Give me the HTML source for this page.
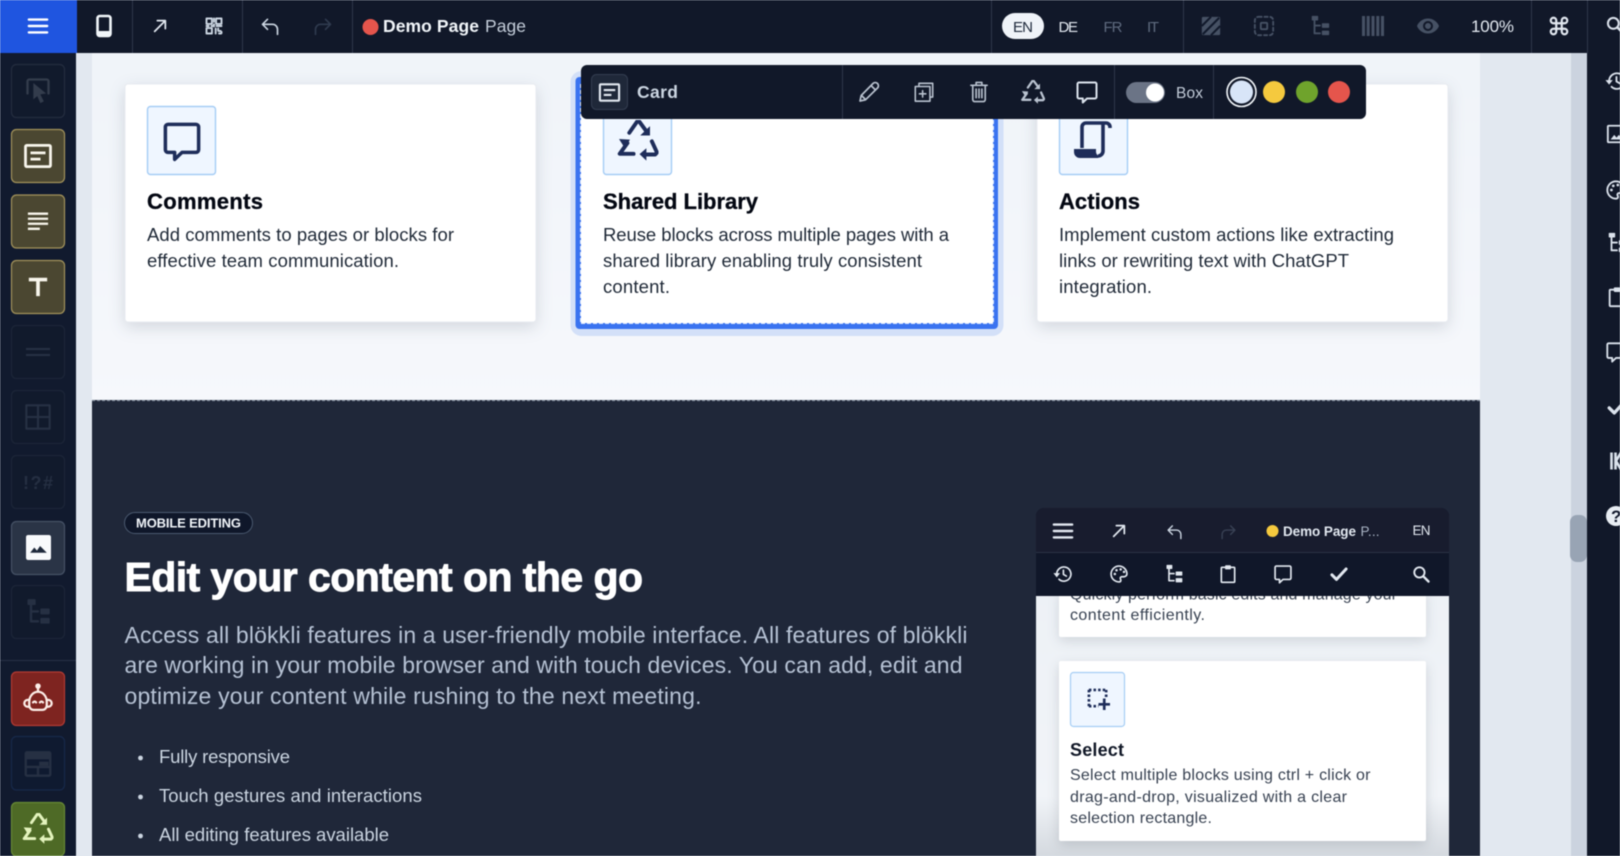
<!DOCTYPE html>
<html lang="en"><head><meta charset="utf-8"><title>Demo Page</title>
<style>
html,body{margin:0;padding:0;width:1620px;height:856px;overflow:hidden;background:#e2e8f0}
svg{display:block;filter:blur(.4px)}
text{font-family:"Liberation Sans",sans-serif}
.t{font-weight:700;font-size:22px;fill:#030712;stroke:#030712;stroke-width:.3px}
.d{font-size:18.5px;fill:#1f2937}
.p{font-size:23px;fill:#b6c2d4}
.l{font-size:18.5px;fill:#cbd5e1}
.s{font-size:16px;fill:#374151}
.sym{fill:none;stroke:currentColor;stroke-linecap:round;stroke-linejoin:round}
</style></head><body>
<svg xmlns="http://www.w3.org/2000/svg" width="1620" height="856" viewBox="0 0 1620 856" stroke-width="2">
<defs>
<linearGradient id="phone" x1="0" y1="0" x2="0" y2="1"><stop offset="0" stop-color="#edf1f6"/><stop offset=".8" stop-color="#f1f4f8"/><stop offset="1" stop-color="#d4d9df"/></linearGradient>
<linearGradient id="pg" x1="0" y1="0" x2="0" y2="1"><stop offset="0" stop-color="#f0f4f9"/><stop offset="1" stop-color="#f6f8fc"/></linearGradient>
<symbol id="i-menu" viewBox="0 0 24 24"><path class="sym" d="M2 5h20M2 12h20M2 19h20" stroke-width="2.600"/></symbol>
<symbol id="i-arrow" viewBox="0 0 24 24"><path class="sym" stroke-width="2.600" d="M4 20L20 4M8 4h12v12"/></symbol>
<symbol id="i-qr" viewBox="0 0 24 24"><g class="sym" stroke-width="2.300" stroke-linecap="butt"><rect x="3" y="3" width="6.500" height="6.500"/><rect x="14.500" y="3" width="6.500" height="6.500"/><rect x="3" y="14.500" width="6.500" height="6.500"/><path d="M12 3v4M12 10v3M3 12h3M9 12h3M15 12h6M14 15v6M17 15v3h4M18 21h3v-2" stroke-dasharray="2.500 1"/></g></symbol>
<symbol id="i-undo" viewBox="0 0 24 24"><path class="sym" d="M9 4L3 10l6 6M3 10h12a6 6 0 0 1 6 6v6"/></symbol>
<symbol id="i-redo" viewBox="0 0 24 24"><path class="sym" d="M15 4l6 6-6 6M21 10H9a6 6 0 0 0-6 6v6"/></symbol>
<symbol id="i-hatch" viewBox="0 0 24 24"><rect x="2" y="2" width="20" height="20" rx="1.500" fill="currentColor"/><path d="M2 12L12 2M3 21L21 3M12 22L22 12" stroke="#10182a" stroke-width="2.200"/></symbol>
<symbol id="i-dashsq" viewBox="0 0 24 24"><rect x="2" y="2" width="20" height="20" rx="4" class="sym" stroke-dasharray="3.500 3" stroke-linecap="butt"/><rect x="8.500" y="8.500" width="7" height="7" rx="1" class="sym"/></symbol>
<symbol id="i-tree" viewBox="0 0 24 24"><g fill="currentColor"><rect x="3" y="1" width="7" height="5" rx=".8"/><rect x="14" y="9" width="8" height="5" rx=".8"/><rect x="14" y="17" width="8" height="5" rx=".8"/></g><path class="sym" stroke-linecap="butt" d="M6 6v14h6M6 11.500h6"/></symbol>
<symbol id="i-bars" viewBox="0 0 24 24"><path d="M2.500 2v20M7.200 2v20M12 2v20M16.800 2v20M21.500 2v20" stroke="currentColor" stroke-width="3"/></symbol>
<symbol id="i-eye" viewBox="0 0 24 24"><path fill="currentColor" fill-rule="evenodd" d="M12 4.500C7 4.500 2.700 7.600 1 12c1.700 4.400 6 7.500 11 7.500s9.300-3.100 11-7.500c-1.700-4.400-6-7.500-11-7.500zm0 12.500a5 5 0 1 1 0-10 5 5 0 0 1 0 10zm0-8a3 3 0 1 0 0 6 3 3 0 0 0 0-6z"/></symbol>
<symbol id="i-cmd" viewBox="0 0 24 24"><path class="sym" stroke-width="2.400" d="M9 9V6a3 3 0 1 0-3 3h12a3 3 0 1 0-3-3v12a3 3 0 1 0 3-3H6a3 3 0 1 0 3 3V9"/></symbol>
<symbol id="i-search" viewBox="0 0 24 24"><circle cx="10" cy="10" r="6.500" class="sym" stroke-width="2.400"/><path class="sym" stroke-width="3" d="M15 15l6.500 6.500"/></symbol>
<symbol id="i-history" viewBox="0 0 24 24"><path class="sym" d="M4.500 12a8.500 8.500 0 1 1 2.700 6.300M12.500 7.500v5l3.500 2"/><path fill="currentColor" d="M0.500 11h8l-4 5z"/></symbol>
<symbol id="i-image" viewBox="0 0 24 24"><rect x="2" y="3" width="20" height="18" rx="1" class="sym"/><path fill="currentColor" d="M5 18l4-5 2.500 3 2.500-3 5 5z"/></symbol>
<symbol id="i-palette" viewBox="0 0 24 24"><path class="sym" d="M12 2.500a9.500 9.500 0 1 0 0 19c1.500 0 2.200-1 2.200-2 0-1.200-.7-1.500-.7-2.500s1-1.700 2-1.700h2.300c2 0 3.700-1.500 3.700-3.500 0-5-4.500-9.300-9.500-9.300z"/><g fill="currentColor"><circle cx="7" cy="12" r="1.500"/><circle cx="9" cy="7.500" r="1.500"/><circle cx="14" cy="6.500" r="1.500"/><circle cx="18" cy="9.500" r="1.500"/></g></symbol>
<symbol id="i-clip" viewBox="0 0 24 24"><rect x="4" y="4" width="16" height="18" rx="1" class="sym"/><rect x="8.500" y="1.500" width="7" height="5" rx="1" fill="currentColor"/></symbol>
<symbol id="i-comment" viewBox="0 0 24 24"><path class="sym" d="M4 2.500h16a1.500 1.500 0 0 1 1.500 1.500v13a1.500 1.500 0 0 1-1.500 1.500h-8l-4.200 4v-4H4A1.500 1.500 0 0 1 2.500 17V4A1.500 1.500 0 0 1 4 2.500z"/></symbol>
<symbol id="i-check" viewBox="0 0 24 24"><path class="sym" stroke-width="3.600" d="M3.500 13l5.500 5.500L20.500 6"/></symbol>
<symbol id="i-phone" viewBox="0 0 24 24"><rect x="5.500" y="2" width="13" height="20" rx="2.200" class="sym" stroke-width="2.600"/><rect x="5" y="17" width="14" height="5" rx="2" fill="currentColor"/></symbol>
<symbol id="i-pencil" viewBox="0 0 24 24"><path class="sym" stroke-width="1.700" d="M3 21l1.200-5.500L16 3.500a2.700 2.700 0 0 1 4.500 4.500L8.500 19.800zM14 5.500l4.500 4.500M4.500 15.500l4 4"/></symbol>
<symbol id="i-dup" viewBox="0 0 24 24"><path class="sym" stroke-width="1.700" d="M6.500 5V2.500h15v15H19"/><rect x="2.500" y="6" width="16" height="16" class="sym" stroke-width="1.700"/><path class="sym" stroke-width="1.700" d="M10.500 10.500v7M7 14h7"/></symbol>
<symbol id="i-trash" viewBox="0 0 24 24"><path class="sym" stroke-width="1.700" d="M3.500 5.500h17M9 5.500V2.500h6v3M5.500 5.500v15a2 2 0 0 0 2 2h9a2 2 0 0 0 2-2v-15M9 9.500v9M12 9.500v9M15 9.500v9"/></symbol>
<symbol id="i-recycle" viewBox="0 0 24 24"><g class="sym" stroke-width="2.300" stroke-linecap="butt" stroke-linejoin="miter"><path d="M6.900 7.500L11.400 1h1.400l4.400 6"/><path d="M5.800 13.500L1.300 19.800h8.100"/><path d="M20.100 12.500l3 6.500-1 1.200h-5"/></g><g fill="currentColor"><path d="M13.300 9.100H19V3.600z"/><path d="M.9 11.100l6.400.4-3 5z"/><path d="M12.900 20l4-3.500v7.300z"/></g></symbol>
<symbol id="i-card" viewBox="0 0 24 24"><rect x="2" y="3.500" width="20" height="17" rx="1" fill="none" stroke="currentColor" stroke-width="2.200"/><path d="M6 9.500h12M6 14.500h8" stroke="currentColor" stroke-width="2.200"/></symbol>
<symbol id="i-lines" viewBox="0 0 24 24"><path d="M1 4h22M1 9.500h22M1 15h22M1 20.500h13" stroke="currentColor" stroke-width="2.500"/></symbol>
<symbol id="i-t" viewBox="0 0 24 24"><path d="M2 3h20v4h-8v16h-4V7H2z" fill="currentColor"/></symbol>
<symbol id="i-pointer" viewBox="0 0 24 24"><path class="sym" d="M3 15V4.500A1.500 1.500 0 0 1 4.500 3h15A1.500 1.500 0 0 1 21 4.500V15"/><path fill="currentColor" d="M8 6l11 9-5 .8 3 6-3 1.400-2.600-6L8 20z"/></symbol>
<symbol id="i-grid" viewBox="0 0 24 24"><path class="sym" stroke-width="1.800" d="M2 2h20v20H2zM12 2v20M2 12h20"/></symbol>
<symbol id="i-img2" viewBox="0 0 24 24"><rect x="0" y="0" width="24" height="24" rx="2" fill="#f8fafc"/><path fill="#1e293b" d="M4 17l4-5 2.500 3 3-4.500 6.500 6.500z"/></symbol>
<symbol id="i-robot" viewBox="0 0 24 24"><g class="sym" stroke-width="1.800"><circle cx="12" cy="2.500" r="1.300" fill="currentColor"/><path d="M12 4v2.500"/><path d="M5 15a7 8 0 0 1 14 0v3a3.500 3.500 0 0 1-3.500 3.500h-7A3.500 3.500 0 0 1 5 18z"/><path d="M5 13.500H3.800a2 2 0 0 0 0 5.500H5M19 13.500h1.200a2 2 0 0 1 0 5.500H19"/><path d="M8 15.500q1.300-1.500 2.500 0M13.500 15.500q1.300-1.500 2.500 0"/></g></symbol>
<symbol id="i-cal" viewBox="0 0 24 24"><rect x="1.500" y="2" width="21" height="20" rx="1" class="sym"/><rect x="1.500" y="2" width="21" height="6" fill="currentColor"/><path class="sym" d="M1.500 14.500h21M12 14.500V22"/><rect x="13" y="10" width="8" height="3.500" fill="currentColor"/></symbol>
<symbol id="i-select" viewBox="0 0 24 24"><path d="M2 2h18M2 2v17M2 19h10" fill="none" stroke="#1e2d5a" stroke-width="2.800" stroke-dasharray="2.600 2.200"/><path d="M20 2v8" fill="none" stroke="#1e2d5a" stroke-width="2.800" stroke-dasharray="2.600 2.200"/><path d="M18 11v12M12 17h12" stroke="#1e2d5a" stroke-width="2.800"/></symbol>
<symbol id="i-scroll" viewBox="0 0 38 38"><g fill="none" stroke="currentColor" stroke-width="3.600"><path d="M8 27V6a4 4 0 0 1 4-4h20a4 4 0 0 1 4 4v1"/><path d="M29 3v27a5 5 0 0 1-5 5"/></g><path fill="currentColor" d="M0 28h22v2a5 5 0 0 0 3 5l-1 2H6a6 6 0 0 1-6-6z"/></symbol>
</defs>

<!-- page background -->
<rect width="1620" height="856" fill="#e2e8f0"/>
<rect x="1571" y="53" width="16" height="803" fill="#cbd3df"/>
<rect x="1570" y="515" width="17" height="47" rx="7" fill="#98a4b4"/>
<rect x="92" y="53" width="1388" height="348" fill="url(#pg)"/>
<rect x="92" y="400" width="1388" height="456" fill="#1f2739"/>
<path d="M92 400.500H1480" stroke="#7c8798" stroke-width="1.200" stroke-dasharray="3 2"/>

<!-- cards row -->
<rect x="125" y="84" width="411" height="238" rx="3" fill="#fff" stroke="#e7ebf0" stroke-width="1" style="filter:drop-shadow(0 5px 8px rgba(30,41,59,.15))"/>
<rect x="1037" y="84" width="411" height="238" rx="3" fill="#fff" stroke="#e7ebf0" stroke-width="1" style="filter:drop-shadow(0 5px 8px rgba(30,41,59,.15))"/>
<rect x="570.500" y="71" width="433" height="265" rx="11" fill="#d3e0f8"/>
<rect x="575.500" y="77" width="422.500" height="252" rx="4" fill="#3a73f0"/>
<rect x="581" y="84" width="412" height="239" fill="#fff"/>
<path d="M580.500 84V323.500H993.500V84" fill="none" stroke="#dce6fb" stroke-width="1" stroke-dasharray="4 2"/>

<rect x="147.500" y="106.500" width="68" height="68" rx="3" fill="#eff6ff" stroke="#a5cdf5" stroke-width="1.400"/>
<rect x="603.500" y="106.500" width="68" height="68" rx="3" fill="#eff6ff" stroke="#a5cdf5" stroke-width="1.400"/>
<rect x="1059.500" y="106.500" width="68" height="68" rx="3" fill="#eff6ff" stroke="#a5cdf5" stroke-width="1.400"/>
<use href="#i-comment" x="161" y="120" width="42" height="42" style="color:#1e2d5a"/>
<use href="#i-recycle" x="617.500" y="120" width="41" height="41" style="color:#1e2d5a"/>
<use href="#i-scroll" x="1074" y="121" width="38" height="38" style="color:#1e2d5a"/>

<text class="t" x="147" y="209" textLength="116">Comments</text>
<text class="d" x="147" y="241" textLength="307">Add comments to pages or blocks for</text>
<text class="d" x="147" y="267" textLength="252">effective team communication.</text>
<text class="t" x="603" y="209" textLength="155">Shared Library</text>
<text class="d" x="603" y="241" textLength="346">Reuse blocks across multiple pages with a</text>
<text class="d" x="603" y="267" textLength="319">shared library enabling truly consistent</text>
<text class="d" x="603" y="293" textLength="67">content.</text>
<text class="t" x="1059" y="209" textLength="81">Actions</text>
<text class="d" x="1059" y="241" textLength="335">Implement custom actions like extracting</text>
<text class="d" x="1059" y="267" textLength="290">links or rewriting text with ChatGPT</text>
<text class="d" x="1059" y="293" textLength="93">integration.</text>

<!-- dark section -->
<rect x="124.500" y="512.500" width="128" height="21" rx="10.500" fill="#0f172a" stroke="#4b5a70" stroke-width="1"/>
<text x="136" y="527.500" font-size="13" font-weight="700" fill="#f1f5f9" textLength="105">MOBILE EDITING</text>
<text x="124.500" y="591" font-size="41" font-weight="700" fill="#fff" stroke="#fff" stroke-width=".9" textLength="518.500">Edit your content on the go</text>
<text class="p" x="124.500" y="643" textLength="843">Access all blökkli features in a user-friendly mobile interface. All features of blökkli</text>
<text class="p" x="124.500" y="673" textLength="838">are working in your mobile browser and with touch devices. You can add, edit and</text>
<text class="p" x="124.500" y="704" textLength="577">optimize your content while rushing to the next meeting.</text>
<circle cx="140.500" cy="758" r="2.400" fill="#cbd5e1"/><circle cx="140.500" cy="797" r="2.400" fill="#cbd5e1"/><circle cx="140.500" cy="836" r="2.400" fill="#cbd5e1"/>
<text class="l" x="159" y="763" textLength="131">Fully responsive</text>
<text class="l" x="159" y="802" textLength="263">Touch gestures and interactions</text>
<text class="l" x="159" y="841" textLength="230">All editing features available</text>

<!-- phone mock -->
<rect x="1036" y="560" width="413" height="296" fill="url(#phone)"/>
<rect x="1059" y="590" width="367" height="47" rx="2" fill="#fff" style="filter:drop-shadow(0 4px 6px rgba(30,41,59,.14))"/>
<text class="s" x="1070" y="599.500" textLength="327">Quickly perform basic edits and manage your</text>
<text class="s" x="1070" y="620" textLength="135">content efficiently.</text>
<rect x="1059" y="661" width="367" height="180" rx="2" fill="#fff" style="filter:drop-shadow(0 4px 6px rgba(30,41,59,.16))"/>
<rect x="1070.500" y="672.500" width="54" height="54" rx="3" fill="#eff6ff" stroke="#a5cdf5" stroke-width="1.200"/>
<use href="#i-select" x="1087" y="688" width="23" height="23"/>
<text x="1070" y="756" font-size="18" font-weight="700" fill="#111827" textLength="54">Select</text>
<text class="s" x="1070" y="780" textLength="300.500">Select multiple blocks using ctrl + click or</text>
<text class="s" x="1070" y="802" textLength="277">drag-and-drop, visualized with a clear</text>
<text class="s" x="1070" y="823" textLength="142">selection rectangle.</text>
<path d="M1036 596V516a8 8 0 0 1 8-8h397a8 8 0 0 1 8 8v80z" fill="#101729"/>
<path d="M1036 552V516a8 8 0 0 1 8-8h397a8 8 0 0 1 8 8v36z" fill="#181c2e"/>
<path d="M1036 552.500H1449" stroke="#2a3245" stroke-width="1"/>
<use href="#i-menu" x="1052" y="520" width="22" height="22" style="color:#e2e8f0"/>
<use href="#i-arrow" x="1111" y="523" width="16" height="16" style="color:#e2e8f0"/>
<use href="#i-undo" x="1166" y="523" width="17" height="17" style="color:#cbd5e1"/>
<use href="#i-redo" x="1220" y="523" width="17" height="17" style="color:#384154"/>
<circle cx="1272.500" cy="531" r="6" fill="#f5c93e"/>
<text x="1283" y="536" font-size="13.500" font-weight="700" fill="#e2e8f0" textLength="73">Demo Page</text>
<text x="1360.500" y="536" font-size="13.500" fill="#a8b3c4" textLength="19">P...</text>
<text x="1412.500" y="535" font-size="13.500" fill="#e2e8f0" textLength="18">EN</text>
<g style="color:#e2e8f0">
<use href="#i-history" x="1053" y="564" width="20" height="20"/>
<use href="#i-palette" x="1109" y="564" width="20" height="20"/>
<use href="#i-tree" x="1164" y="564" width="20" height="20"/>
<use href="#i-clip" x="1218" y="564" width="20" height="20"/>
<use href="#i-comment" x="1273" y="564" width="20" height="20"/>
<use href="#i-check" x="1329" y="564" width="20" height="20"/>
<use href="#i-search" x="1411.500" y="564.500" width="19" height="19"/>
</g>

<!-- top bar -->
<rect width="1620" height="53" fill="#111829"/>
<rect width="77" height="53" fill="#1f55e0"/>
<path d="M132.500 0v53M242.500 0v53M352.500 0v53M991.500 0v53M1183.500 0v53M1531.500 0v53M1587.500 0v53" stroke="#2f3749" stroke-width="1"/>
<use href="#i-menu" x="27" y="15" width="22" height="22" style="color:#fff"/>
<use href="#i-phone" x="92" y="14" width="24" height="24" style="color:#f1f5f9"/>
<use href="#i-arrow" x="152" y="18" width="16" height="16" style="color:#e2e8f0"/>
<use href="#i-qr" x="204" y="16" width="20" height="20" style="color:#cbd5e1"/>
<use href="#i-undo" x="260" y="16" width="20" height="20" style="color:#cbd5e1"/>
<use href="#i-redo" x="313" y="16" width="20" height="20" style="color:#2f3a4e"/>
<circle cx="370.500" cy="27" r="8" fill="#e5554c"/>
<text x="383" y="32" font-size="17.500" font-weight="700" fill="#f1f5f9" textLength="96">Demo Page</text>
<text x="485" y="32" font-size="17.500" fill="#c3ccd9" textLength="41">Page</text>
<rect x="1002" y="13" width="42" height="26" rx="13" fill="#eff3f8"/>
<text x="1013" y="32" font-size="15" fill="#1e293b" textLength="20">EN</text>
<text x="1058.500" y="32" font-size="15" fill="#e2e8f0" textLength="19.500">DE</text>
<text x="1103.500" y="32" font-size="15" fill="#5f6b7f" textLength="19">FR</text>
<text x="1147" y="32" font-size="15" fill="#5f6b7f" textLength="12">IT</text>
<g style="color:#465164">
<use href="#i-hatch" x="1200" y="15" width="22" height="22"/>
<use href="#i-dashsq" x="1253" y="15" width="22" height="22"/>
<use href="#i-tree" x="1309" y="15" width="22" height="22"/>
<use href="#i-bars" x="1361" y="14" width="24" height="24"/>
<use href="#i-eye" x="1416" y="14" width="24" height="24"/>
</g>
<text x="1471" y="32" font-size="17" fill="#e2e8f0" textLength="43">100%</text>
<use href="#i-cmd" x="1548" y="15" width="22" height="22" style="color:#e2e8f0"/>

<!-- right sidebar -->
<rect x="1587" y="53" width="33" height="803" fill="#111829"/>
<g style="color:#dbe2ec">
<use href="#i-search" x="1605" y="15" width="20" height="20"/>
<use href="#i-history" x="1605" y="70" width="22" height="22"/>
<use href="#i-image" x="1606" y="123" width="22" height="22"/>
<use href="#i-palette" x="1605" y="179" width="22" height="22"/>
<use href="#i-tree" x="1606" y="232" width="22" height="22"/>
<use href="#i-clip" x="1606" y="286" width="22" height="22"/>
<use href="#i-comment" x="1605" y="341" width="22" height="22"/>
<use href="#i-check" x="1606" y="396" width="22" height="22"/>
</g>
<path d="M1611.500 452.500v17M1615.500 452.500v17M1621 452.500l-5 8.500 5 8.500" fill="none" stroke="#dbe2ec" stroke-width="2.600"/>
<circle cx="1616" cy="516" r="10" fill="#e8edf3"/>
<text x="1611" y="522" font-size="17" font-weight="700" fill="#10172a">?</text>

<!-- left sidebar -->
<rect y="53" width="76" height="803" fill="#111a2e"/>
<path d="M0 660.500H76" stroke="#273146" stroke-width="1"/>
<g stroke-width="1.200">
<rect x="11.500" y="64.500" width="53" height="53" rx="5" fill="#111a2c" stroke="#242d3f"/>
<rect x="11.500" y="129.500" width="53" height="53" rx="5" fill="#4b4731" stroke="#a3935b"/>
<rect x="11.500" y="195" width="53" height="53" rx="5" fill="#4b4731" stroke="#a3935b"/>
<rect x="11.500" y="260.500" width="53" height="53" rx="5" fill="#4b4731" stroke="#a3935b"/>
<rect x="11.500" y="325.500" width="53" height="53" rx="5" fill="#111a2c" stroke="#1c2538"/>
<rect x="11.500" y="390.500" width="53" height="53" rx="5" fill="#111a2c" stroke="#1c2538"/>
<rect x="11.500" y="455.500" width="53" height="53" rx="5" fill="#111a2c" stroke="#1c2538"/>
<rect x="11.500" y="521.500" width="53" height="53" rx="5" fill="#2a3446" stroke="#465266"/>
<rect x="11.500" y="585.500" width="53" height="53" rx="5" fill="#111a2c" stroke="#1c2538"/>
<rect x="11.500" y="672" width="53" height="53.500" rx="5" fill="#7e2420" stroke="#b23a33"/>
<rect x="11.500" y="736.500" width="53" height="53.500" rx="5" fill="#0f1a30" stroke="#17294a"/>
<rect x="11.500" y="802.500" width="53" height="53.500" rx="5" fill="#4e6a26" stroke="#678a35"/>
</g>
<use href="#i-pointer" x="24" y="76" width="28" height="28" style="color:#333c4c"/>
<use href="#i-card" x="23" y="141" width="30" height="30" style="color:#f8f6ec"/>
<use href="#i-lines" x="27" y="210" width="22" height="22" style="color:#f8f6ec"/>
<use href="#i-t" x="27" y="275" width="22" height="22" style="color:#f8f6ec"/>
<path d="M26 349h24M26 355h24" stroke="#273144" stroke-width="2"/>
<use href="#i-grid" x="24" y="403" width="28" height="28" style="color:#273144"/>
<text x="23" y="489" font-size="18" font-weight="700" fill="#252f42" textLength="30">!?#</text>
<use href="#i-img2" x="26" y="535" width="25" height="25"/>
<use href="#i-tree" x="24" y="598" width="28" height="28" style="color:#263043"/>
<use href="#i-robot" x="23" y="683" width="30" height="30" style="color:#fdeee8"/>
<use href="#i-cal" x="24" y="750" width="28" height="28" style="color:#263043"/>
<use href="#i-recycle" x="22.500" y="813" width="31" height="31" style="color:#e3f3bd"/>

<!-- floating toolbar -->
<rect x="581" y="65" width="785" height="54" rx="6" fill="#111829"/>
<path d="M842.500 65v54M1114.500 65v54M1213.500 65v54" stroke="#2f3749" stroke-width="1"/>
<rect x="591.500" y="74.500" width="36" height="35" rx="5" fill="#1f2839" stroke="#333d50" stroke-width="1"/>
<use href="#i-card" x="598" y="81" width="23" height="23" style="color:#e2e8f0"/>
<text x="637" y="98" font-size="17.500" font-weight="700" fill="#cbd5e1" textLength="41">Card</text>
<g style="color:#b9c2cf">
<use href="#i-pencil" x="857" y="80" width="24" height="24"/>
<use href="#i-dup" x="913" y="81" width="22" height="22"/>
<use href="#i-trash" x="967.500" y="80" width="23" height="23"/>
<use href="#i-recycle" x="1021" y="80" width="24" height="24"/>
<use href="#i-comment" x="1075" y="80" width="24" height="24" style="color:#dbe2ec"/>
</g>
<rect x="1126" y="82" width="39" height="21" rx="10.500" fill="#6b7486"/>
<circle cx="1155" cy="92.500" r="9" fill="#fff"/>
<text x="1176" y="98" font-size="15.500" fill="#c3ccd9" textLength="27">Box</text>
<circle cx="1241.500" cy="92" r="14.500" fill="#111829" stroke="#f1f5f9" stroke-width="1.600"/>
<circle cx="1241.500" cy="92" r="11.500" fill="#d8e5f8"/>
<circle cx="1274" cy="92" r="11" fill="#f5c93e"/>
<circle cx="1307" cy="92" r="11" fill="#6fa32c"/>
<circle cx="1339" cy="92" r="11" fill="#e5554c"/>
</svg>
</body></html>
